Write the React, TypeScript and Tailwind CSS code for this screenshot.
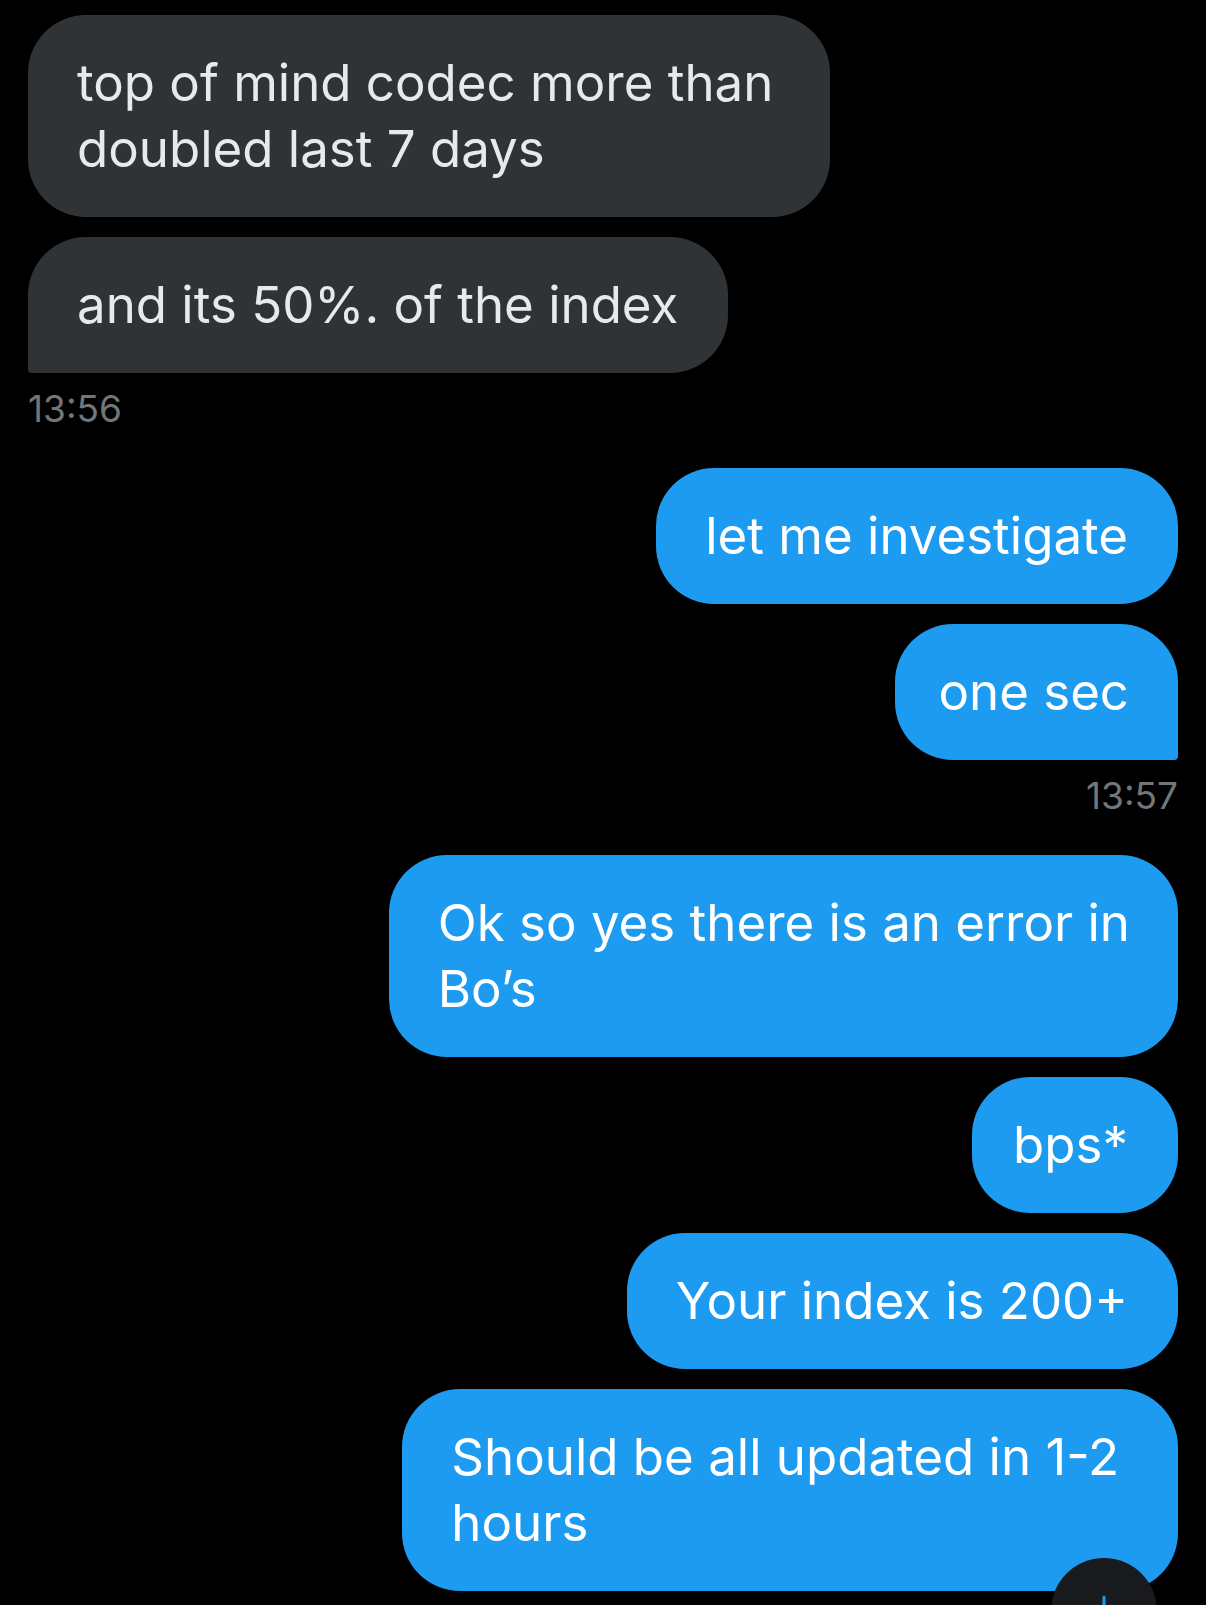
import React from 'react';

type Msg = {
  lines: string[];
  tail?: boolean; // last in its group: flat corner on the sender side
  padRight?: string;
};

const groups: { msgs: Msg[]; time?: string; mine?: boolean }[] = [
  {
    msgs: [
      { lines: ['top of mind codec more than', 'doubled last 7 days'], padRight: 'pr-[57px]' },
      { lines: ['and its 50%. of the index'], tail: true },
    ],
    time: '13:56',
  },
  {
    mine: true,
    msgs: [
      { lines: ['let me investigate'] },
      { lines: ['one sec'], tail: true, padRight: 'pr-[49px] pl-[43px]' },
    ],
    time: '13:57',
  },
  {
    mine: true,
    msgs: [
      { lines: ['Ok so yes there is an error in', 'Bo’s'], padRight: 'pr-[48px]' },
      { lines: ['bps*'], padRight: 'pr-[50px] pl-[41px]' },
      { lines: ['Your index is 200+'] },
      { lines: ['Should be all updated in 1-2', 'hours'], padRight: 'pr-[59px]' },
    ],
  },
];

function Bubble({ msg, mine }: { msg: Msg; mine?: boolean }) {
  return (
    <div
      className={[
        'w-fit rounded-[58px] py-[35px] text-[51px] leading-[66px] whitespace-nowrap',
        msg.padRight ?? 'pl-[49px] pr-[50px]',
        msg.padRight && !msg.padRight.includes('pl-') ? 'pl-[49px]' : '',
        mine ? 'self-end bg-[#1d9bf0] text-white' : 'self-start bg-[#2f3336] text-[#e7e9ea]',
        msg.tail && mine ? 'rounded-br-[4px]' : '',
        msg.tail && !mine ? 'rounded-bl-[4px]' : '',
      ].join(' ')}
    >
      {msg.lines.map((line, i) => (
        <React.Fragment key={i}>
          {i > 0 && <br />}
          {line}
        </React.Fragment>
      ))}
    </div>
  );
}

export default function App(): React.ReactElement {
  return (
    <main
      className="relative h-[1605px] w-[1206px] overflow-hidden bg-black"
      style={{ fontFamily: 'Inter, "Noto Sans", sans-serif' }}
    >
      <div className="flex flex-col px-[28px] pt-[15px]">
        {groups.map((group, gi) => (
          <div key={gi} className="flex flex-col">
            <div className="flex flex-col gap-[20px]">
              {group.msgs.map((msg, mi) => (
                <Bubble key={mi} msg={msg} mine={group.mine} />
              ))}
            </div>
            {group.time && (
              <p
                className={[
                  'mt-[14px] mb-[37px] text-[37px] leading-[44px] text-[#71767b]',
                  group.mine ? 'text-right' : 'text-left',
                ].join(' ')}
              >
                {group.time}
              </p>
            )}
          </div>
        ))}
      </div>

      {/* scroll-to-bottom button, mostly below the fold */}
      <div className="absolute left-[1051px] top-[1558px] flex h-[106px] w-[106px] items-center justify-center rounded-full bg-[#181a1d]">
        <svg width="48" height="48" viewBox="0 0 24 24" fill="none" stroke="#1d9bf0" strokeWidth="1.5" strokeLinecap="round" strokeLinejoin="round">
          <path d="M12 5v14" />
          <path d="m19 12-7 7-7-7" />
        </svg>
      </div>
    </main>
  );
}
